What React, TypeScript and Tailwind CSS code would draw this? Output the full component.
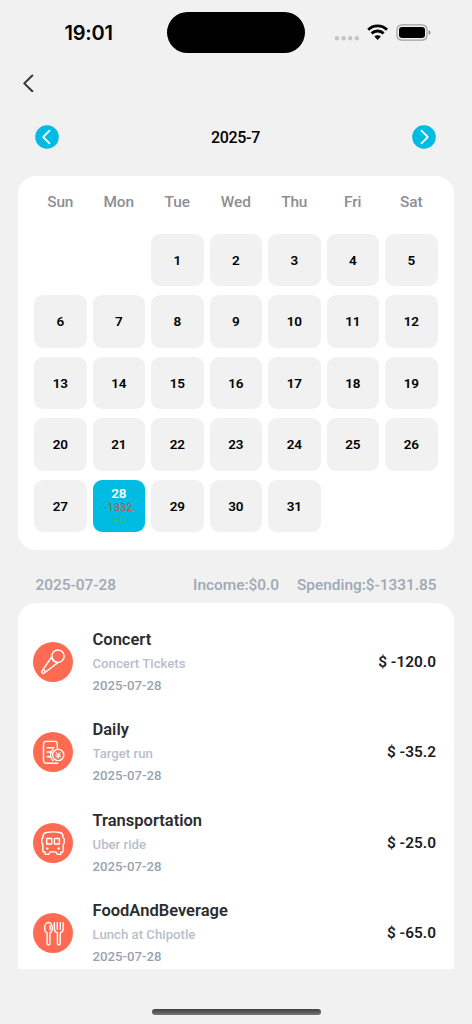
import React from "react";

const weekdays = ["Sun", "Mon", "Tue", "Wed", "Thu", "Fri", "Sat"];
const cells: (number | null)[] = [null, null, ...Array.from({ length: 31 }, (_, i) => i + 1)];

const MicIcon = () => (
  <>
    <circle cx="25" cy="14.2" r="6.2" />
    <path d="M19 14.5 8.8 29.3c-.8 1.4.8 2.6 2.2 1.9L24.8 20.6M18.8 15c.6 2.7 2.3 4.8 5 5.8M11 28l1.6 1.7" />
  </>
);

const BillIcon = () => (
  <>
    <path d="M24.3 16.2v-4.4a2.4 2.4 0 0 0-2.4-2.4h-8.6a2.8 2.8 0 0 0-2.8 2.8v16.3a2.8 2.8 0 0 0 2.8 2.8h11.3M14 15.7h7M14 20h4.3M14 24.8h3.3" />
    <circle cx="25.2" cy="23" r="5.6" />
    <path d="M19.9 17.4a7.6 7.6 0 0 0 0 11.2" />
    <path d="m23.2 20.5 2 2.2 2-2.2M25.2 22.5v3.6M23 23h4.4M23 24.7h4.4" strokeWidth="1.1" />
  </>
);

const BusIcon = () => (
  <>
    <path d="M13.2 9.5c4.2-.8 9.4-.8 13.6 0 2.2.4 3.2 1.7 3.2 3.8v1.4l1.2 1v4.6l-1 .8v6.3c0 1.2-.6 1.8-1.8 1.8h-.6v2.2h-3.4l-1.6-2.5h-5.6l-1.6 2.5h-3.4v-2.2h-.6c-1.2 0-1.8-.6-1.8-1.8v-6.3l-1-.8v-4.6l1.2-1v-1.4c0-2.1 1-3.4 3.2-3.8Z" />
    <path d="M13.7 15.5h5V21h-5ZM21.4 15.5h5V21h-5Z" />
    <circle cx="14.3" cy="25.5" r="1.2" fill="white" stroke="none" />
    <circle cx="25.7" cy="25.5" r="1.2" fill="white" stroke="none" />
  </>
);

const FoodIcon = () => (
  <>
    <path d="M14.1 20c-1.6-1-2.5-2.9-2.5-5.1 0-3.1 1.7-5.4 3.9-5.4s3.9 2.3 3.9 5.4c0 2.2-.9 4.1-2.5 5.1v10.4c0 2-2.8 2-2.8 0ZM17 12.5c.5 1.5.5 3.1-.1 4.4" />
    <path d="M21.4 9.8v6.3c0 1.9 1.1 3.2 3 3.8v10.5c0 2 2.8 2 2.8 0V19.9c1.9-.6 3-1.9 3-3.8V9.8M24.3 9.8v6.4M27.3 9.8v6.4" />
  </>
);

const entries = [
  { title: "Concert", note: "Concert Tickets", amount: "$ -120.0", icon: MicIcon },
  { title: "Daily", note: "Target run", amount: "$ -35.2", icon: BillIcon },
  { title: "Transportation", note: "Uber ride", amount: "$ -25.0", icon: BusIcon },
  { title: "FoodAndBeverage", note: "Lunch at Chipotle", amount: "$ -65.0", icon: FoodIcon },
];

function StatusBar() {
  return (
    <div className="flex h-[65px] shrink-0 items-center">
      <div className="w-[167px] pl-[64.5px] font-['Inter',sans-serif] text-[20px] leading-none font-semibold tracking-[-0.2px] text-black">
        19:01
      </div>
      <div className="h-[41px] w-[138px] rounded-full bg-black" />
      <svg className="ml-[29px]" width="98" height="18" viewBox="334 23 98 18" fill="none">
        <g fill="#c3c3c4">
          <circle cx="337" cy="37.3" r="2.2" />
          <circle cx="343.6" cy="37.3" r="2.2" />
          <circle cx="350.2" cy="37.3" r="2.2" />
          <circle cx="356.8" cy="37.3" r="2.2" />
        </g>
        <g transform="translate(0 -1.2)">
          <g stroke="#000" strokeWidth="2.9">
            <path d="M368.2 29.9a13.4 13.4 0 0 1 18.8 0" />
            <path d="M371.6 33.6a8.6 8.6 0 0 1 12 0" />
          </g>
          <path d="M377.6 40.2l-3.2-3.4a4.6 4.6 0 0 1 6.4 0Z" fill="#000" />
        </g>
        <rect x="397" y="23.8" width="30" height="15.4" rx="4.8" stroke="#9d9d9d" strokeWidth="1.2" />
        <rect x="399" y="26" width="26" height="11" rx="3" fill="#000" />
        <path d="M428.7 29.3c2.4.6 2.4 4 0 4.6Z" fill="#8d8d8d" />
      </svg>
    </div>
  );
}

function MonthArrow({ d, label }: { d: string; label: string }) {
  return (
    <button aria-label={label} className="size-6">
      <svg width="24" height="24" viewBox="0 0 24 24" fill="none">
        <circle cx="12" cy="12" r="11.8" fill="#00bbe2" />
        <path d={d} stroke="white" strokeWidth="1.8" strokeLinecap="round" strokeLinejoin="round" />
      </svg>
    </button>
  );
}

export default function App() {
  return (
    <div className="flex h-[1024px] w-[472px] flex-col overflow-hidden bg-[#f1f1f1] font-['Roboto',sans-serif]">
      <StatusBar />
      <div className="flex h-[36px] shrink-0 items-center pl-[22px]">
        <svg width="13" height="18" viewBox="0 0 13 18" fill="none">
          <path d="M10.3 1.5 2.3 9.4l8 7.9" stroke="#333" strokeWidth="2" strokeLinecap="round" strokeLinejoin="round" />
        </svg>
      </div>
      <div className="flex h-[72px] shrink-0 items-center justify-between pr-[36px] pl-[35px]">
        <MonthArrow label="Previous month" d="M14.5 5.7 8.2 12l6.3 6.3" />
        <span className="pt-px text-[16px] font-medium tracking-[-0.3px] text-black">2025-7</span>
        <MonthArrow label="Next month" d="m9.5 5.7 6.3 6.3-6.3 6.3" />
      </div>

      <section className="mx-[18px] mt-[3px] h-[373.5px] shrink-0 rounded-[18px] bg-white pr-[16.5px] pl-[16px]">
        <div className="grid h-[57.5px] grid-cols-7 gap-x-[6px] pt-[14px] text-center text-[15.4px] leading-[25px] font-medium tracking-[-0.1px] text-[#8e8e93]">
          {weekdays.map((d) => (
            <span key={d}>{d}</span>
          ))}
        </div>
        <div className="grid grid-cols-7 gap-x-[6px] gap-y-[9px]">
          {cells.map((d, i) =>
            d === null ? (
              <div key={i} />
            ) : d === 28 ? (
              <div key={i} className="flex h-[52.5px] flex-col items-center rounded-[9px] bg-[#00bbe2] pt-[6px] text-[13.5px] leading-[15px] font-semibold tracking-[-0.3px] text-white">
                <span>28</span>
                <span className="text-[11px] leading-[14px] font-normal tracking-[0.1px] text-[#e8453c]">-1332</span>
                <span className="text-[11px] leading-[12px] font-normal tracking-normal text-[#2fc658]">+0</span>
              </div>
            ) : (
              <div key={i} className="flex h-[52.5px] items-center justify-center rounded-[9px] bg-[#f1f1f1] text-[13.5px] font-semibold tracking-[-0.3px] text-black">
                {d}
              </div>
            ),
          )}
        </div>
      </section>

      <div className="flex h-[53.5px] shrink-0 items-center pt-[18px] pr-[35.5px] pl-[35.5px] text-[15.4px] font-medium text-[#9da9b6]">
        <span>2025-07-28</span>
        <span className="ml-auto">Income:$0.0</span>
        <span className="ml-[18px]">Spending:$-1331.85</span>
      </div>

      <section className="mx-[18px] h-[365.5px] shrink-0 overflow-hidden rounded-t-[18px] bg-white pt-[13.5px]">
        {entries.map(({ title, note, amount, icon: Icon }) => (
          <div key={title} className="flex h-[90.5px] items-center pr-[18px] pl-[15px]">
            <svg width="40" height="40" viewBox="0 0 40 40" fill="none" stroke="white" strokeWidth="1.4" strokeLinecap="round" strokeLinejoin="round">
              <circle cx="20" cy="20" r="20" fill="#ff6b52" stroke="none" />
              <Icon />
            </svg>
            <div className="ml-[19.5px] flex flex-col pt-px">
              <span className="text-[16.5px] leading-[24px] font-semibold text-[#2c2c2e]">{title}</span>
              <span className="text-[13.2px] leading-[23px] font-medium text-[#b7c0ca]">{note}</span>
              <span className="text-[13.2px] leading-[22px] font-medium text-[#97a3b0]">2025-07-28</span>
            </div>
            <span className="ml-auto pt-px text-[15.4px] font-semibold text-[#1c1c1e]">{amount}</span>
          </div>
        ))}
      </section>

      <div className="mt-[40px] h-[6px] w-[169px] shrink-0 self-center rounded-full bg-gradient-to-b from-[#3f3f3f] to-[#777]" />
    </div>
  );
}
